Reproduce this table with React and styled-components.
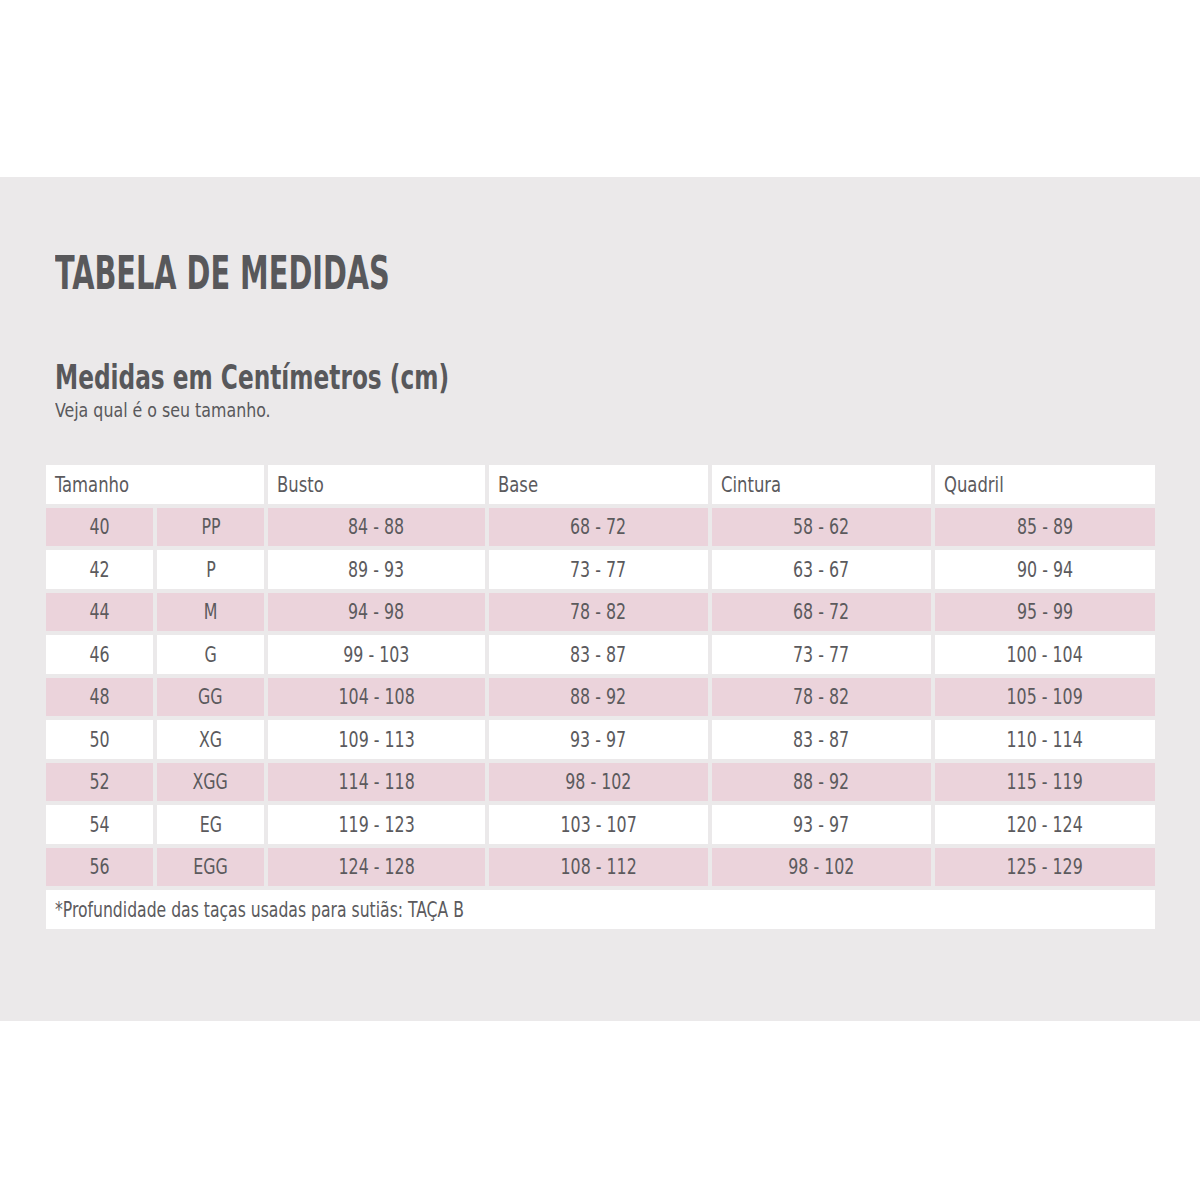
import React from 'react';
import styled, {createGlobalStyle} from 'styled-components'

const GlobalStyle = createGlobalStyle`
    body {
        margin: 0;
        background: #ffffff;
        font-family: "DejaVu Sans Condensed", "DejaVu Sans", sans-serif;
        font-stretch: condensed;
    }
`

const Page = styled.div`
    padding-top: 177px;
    height: 1200px;
    box-sizing: border-box;
`

const Band = styled.section`
    background: #ebe9ea;
    height: 844px;
    padding: 68px 46px 0 46px;
    box-sizing: border-box;
    color: #58585b;
`

// the reference uses a narrow condensed face, so the text is squeezed horizontally
const Squeeze = styled.span`
    display: inline-block;
    transform: scaleX(${p => p.$x || 0.8});
    transform-origin: ${p => p.$center ? 'center' : 'left'} center;
    white-space: nowrap;
`

const Title = styled.h1`
    margin: 0 0 0 9px;
    font-size: 46px;
    font-weight: 700;
    line-height: 56px;
`

const Subtitle = styled.h2`
    margin: 58px 0 0 9px;
    font-size: 33px;
    font-weight: 700;
    line-height: 38px;
`

const Hint = styled.p`
    margin: 0 0 0 9px;
    font-size: 20px;
    line-height: 26px;
`

const Grid = styled.div`
    margin-top: 42px;
    display: grid;
    grid-template-columns: 107px 107px 217px 219px 219px 220px;
    grid-auto-rows: 38.5px;
    gap: 4px;
    width: 1108px;
`

const Cell = styled.div`
    background: ${p => p.$pink ? '#ebd3db' : '#ffffff'};
    grid-column: ${p => p.$span ? `span ${p.$span}` : 'auto'};
    display: flex;
    align-items: center;
    justify-content: ${p => p.$left ? 'flex-start' : 'center'};
    padding: 0 ${p => p.$left ? '9px' : '0'};
    font-size: 22px;
    color: #5b5a5d;
    overflow: hidden;
`

const rows = [
    ['40', 'PP', '84 - 88', '68 - 72', '58 - 62', '85 - 89'],
    ['42', 'P', '89 - 93', '73 - 77', '63 - 67', '90 - 94'],
    ['44', 'M', '94 - 98', '78 - 82', '68 - 72', '95 - 99'],
    ['46', 'G', '99 - 103', '83 - 87', '73 - 77', '100 - 104'],
    ['48', 'GG', '104 - 108', '88 - 92', '78 - 82', '105 - 109'],
    ['50', 'XG', '109 - 113', '93 - 97', '83 - 87', '110 - 114'],
    ['52', 'XGG', '114 - 118', '98 - 102', '88 - 92', '115 - 119'],
    ['54', 'EG', '119 - 123', '103 - 107', '93 - 97', '120 - 124'],
    ['56', 'EGG', '124 - 128', '108 - 112', '98 - 102', '125 - 129'],
]

const headers = ['Busto', 'Base', 'Cintura', 'Quadril']

function App() {
    return (
        <Page>
            <GlobalStyle/>
            <Band>
                <Title><Squeeze $x={0.695}>TABELA DE MEDIDAS</Squeeze></Title>
                <Subtitle><Squeeze $x={0.783}>Medidas em Centímetros (cm)</Squeeze></Subtitle>
                <Hint><Squeeze $x={0.88}>Veja qual é o seu tamanho.</Squeeze></Hint>

                <Grid>
                    <Cell $left $span={2}><Squeeze $x={0.83}>Tamanho</Squeeze></Cell>
                    {headers.map(h => (
                        <Cell $left key={h}><Squeeze $x={0.83}>{h}</Squeeze></Cell>
                    ))}

                    {rows.map((row, i) =>
                        row.map((value, j) => (
                            <Cell key={i + '-' + j} $pink={i % 2 === 0}>
                                <Squeeze $center $x={0.8}>{value}</Squeeze>
                            </Cell>
                        ))
                    )}

                    <Cell $left $span={6}>
                        <Squeeze $x={0.79}>*Profundidade das taças usadas para sutiãs: TAÇA B</Squeeze>
                    </Cell>
                </Grid>
            </Band>
        </Page>
    );
}

export default App;
